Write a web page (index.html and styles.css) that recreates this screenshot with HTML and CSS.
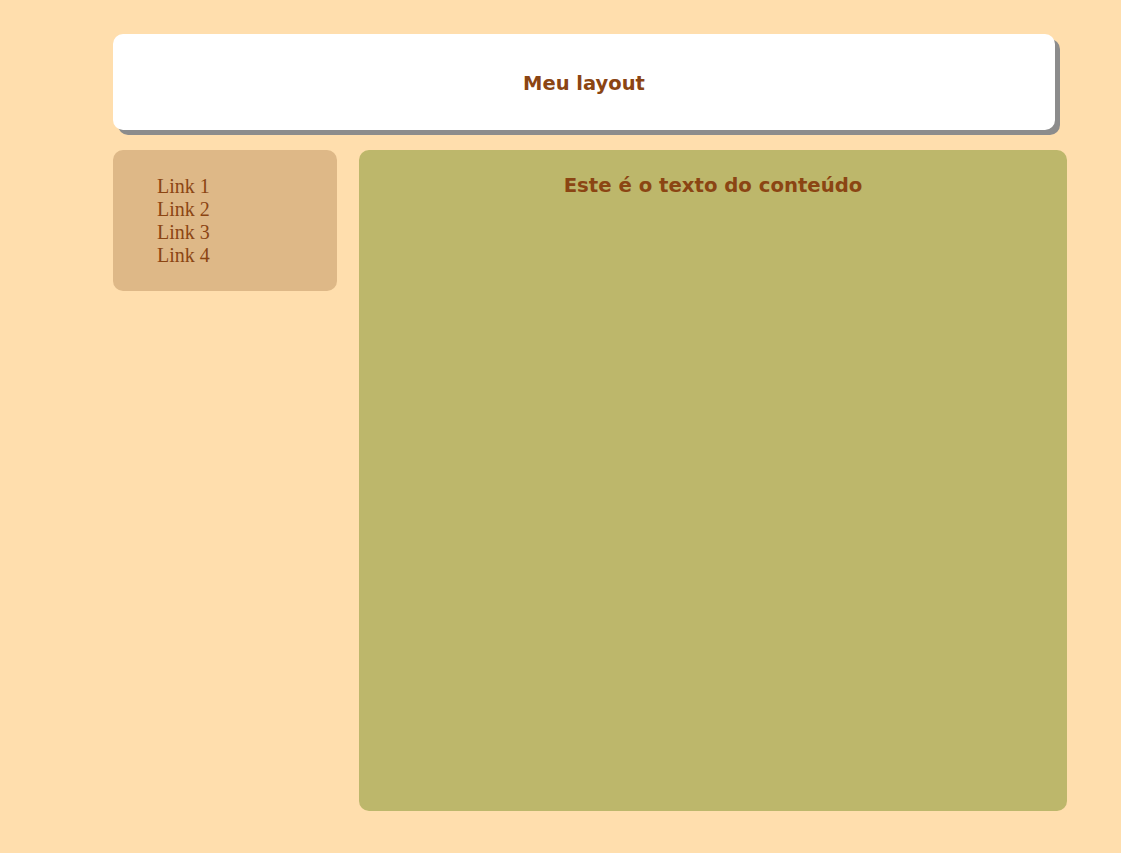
FILE: index.html
```html
<!DOCTYPE html>
<html lang="pt">
<head>
<meta charset="utf-8">
<title>Meu layout</title>
<link rel="stylesheet" href="styles.css">
</head>
<body>
<div class="page">
  <header class="header">
    <h1 class="header-title">Meu layout</h1>
  </header>
  <div class="main">
    <nav class="sidebar">
      <ul class="links">
        <li>Link 1</li>
        <li>Link 2</li>
        <li>Link 3</li>
        <li>Link 4</li>
      </ul>
    </nav>
    <section class="content">
      <h2 class="content-title">Este é o texto do conteúdo</h2>
    </section>
  </div>
</div>
</body>
</html>
```

FILE: styles.css
```css
html, body {
  margin: 0;
  padding: 0;
}
body {
  background: #FFDEAD;
  color: #8B4513;
  font-family: "Liberation Serif", serif;
}
.page {
  margin-left: 113px;
  width: 954px;
  padding-top: 34px;
}
.header {
  width: 942px;
  height: 96px;
  padding-top: 2px;
  box-sizing: border-box;
  background: #fff;
  border-radius: 10px;
  box-shadow: 5px 5px 0 #8c8c8c;
  display: flex;
  align-items: center;
  justify-content: center;
}
.header-title {
  margin: 0;
  font-family: "DejaVu Sans", Verdana, sans-serif;
  font-weight: bold;
  font-size: 19.5px;
}
.main {
  display: grid;
  grid-template-columns: 224px 708px;
  column-gap: 22px;
  align-items: start;
  margin-top: 20px;
}
.sidebar {
  background: #DEB887;
  border-radius: 10px;
  height: 141px;
  padding: 25px 0 0 44px;
  box-sizing: border-box;
}
.links {
  list-style: none;
  margin: 0;
  padding: 0;
  font-size: 20px;
  line-height: 23px;
}
.content {
  background: #BDB76B;
  border-radius: 10px;
  height: 661px;
  padding-top: 24px;
  box-sizing: border-box;
}
.content-title {
  margin: 0;
  text-align: center;
  font-family: "DejaVu Sans", Verdana, sans-serif;
  font-weight: bold;
  font-size: 19.7px;
}
```
